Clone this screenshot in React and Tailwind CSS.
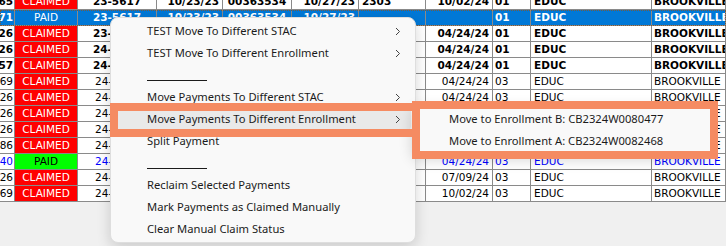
import React from 'react';

const COLS = 'grid grid-cols-[15px_63px_79px_66px_69px_67px_67px_67px_38px_121px_74px]';

// per-column alignment
const ALIGN = [
  'justify-end pr-[1px]',
  'justify-center',
  'justify-center',
  'justify-end pr-[3px]',
  'justify-center',
  'justify-end pr-[3px]',
  'justify-start pl-[3px]',
  'justify-end pr-[3px]',
  'justify-start pl-[2px]',
  'justify-start pl-[3px]',
  'justify-start pl-[2px]',
];

const row = (id, status, num, d3, fund, extra = {}) => ({
  cells: [id, status, num, extra.d1 ?? '11/06/23', extra.chk ?? '00371122', extra.d2 ?? '11/10/23', extra.code ?? '2303', d3, fund, 'EDUC', 'BROOKVILLE'],
  ...extra,
});

const rows = [
  row('65', 'CLAIMED', '23-5617', '10/02/24', '01', { bold: true, d1: '10/23/23', chk: '00363534', d2: '10/27/23' }),
  row('71', 'PAID', '23-5617', '', '01', { bold: true, selected: true, d1: '10/23/23', chk: '00363534', d2: '10/27/23', code: '' }),
  row('26', 'CLAIMED', '23-5617', '04/24/24', '01', { bold: true }),
  row('26', 'CLAIMED', '24-0126', '04/24/24', '01', { bold: true }),
  row('57', 'CLAIMED', '24-0157', '04/24/24', '01', { bold: true }),
  row('69', 'CLAIMED', '24-0169', '04/24/24', '03'),
  row('26', 'CLAIMED', '24-0226', '04/24/24', '03'),
  row('26', 'CLAIMED', '24-0326', '04/24/24', '03'),
  row('26', 'CLAIMED', '24-0426', '04/24/24', '03'),
  row('86', 'CLAIMED', '24-0486', '04/24/24', '03'),
  row('40', 'PAID', '24-0540', '04/24/24', '03', { blue: true }),
  row('26', 'CLAIMED', '24-0626', '07/09/24', '03'),
  row('69', 'CLAIMED', '24-0769', '10/02/24', '03'),
];

const GridRow = ({ r }) => {
  const text = r.selected ? 'text-white' : r.blue ? 'text-[#0000ff]' : 'text-black';
  return (
    <div className={`${COLS} ${r.selected ? 'bg-[#0078d7] outline-1 outline-dotted outline-[#7a5a3a] -outline-offset-1' : 'bg-white'} ${r.bold ? 'font-bold' : ''}`}>
      {r.cells.map((c, i) => {
        let cls = text;
        if (i === 1 && !r.selected) {
          cls = c === 'PAID' ? 'bg-[#00ff00] text-black font-normal' : 'bg-[#ff0000] text-white font-normal';
        }
        if (i === 1 && r.selected) cls = 'text-white font-normal';
        return (
          <div
            key={i}
            className={`flex items-center h-4 overflow-hidden whitespace-nowrap border-r border-b border-[#8a8a8a] leading-[15px] ${ALIGN[i]} ${cls}`}
          >
            {c}
          </div>
        );
      })}
    </div>
  );
};

const Chevron = () => (
  <svg width="6" height="9" viewBox="0 0 6 9" className="text-[#444]">
    <path d="M1 1l3.5 3.5L1 8" fill="none" stroke="currentColor" strokeWidth="1" />
  </svg>
);

const menuItems = [
  { label: 'TEST Move To Different STAC', sub: true },
  { label: 'TEST Move To Different Enrollment', sub: true },
  { sep: true },
  { label: 'Move Payments To Different STAC', sub: true },
  { label: 'Move Payments To Different Enrollment', sub: true, active: true },
  { label: 'Split Payment' },
  { sep: true },
  { label: 'Reclaim Selected Payments' },
  { label: 'Mark Payments as Claimed Manually' },
  { label: 'Clear Manual Claim Status' },
];

const MenuItem = ({ item }) => {
  if (item.sep) {
    return (
      <div className="h-[22px] pl-[32px] pt-[16px]">
        <div className="w-[60px] h-px bg-[#1b1b1b]" />
      </div>
    );
  }
  return (
    <div className={`h-[22px] flex items-center justify-between pl-[32px] pr-[10px] rounded ${item.active ? 'bg-[#e9e9e9]' : ''}`}>
      <span>{item.label}</span>
      {item.sub && <Chevron />}
    </div>
  );
};

export default function App() {
  return (
    <div className="relative w-[726px] h-[246px] overflow-hidden bg-[#f0f0f0] font-['DejaVu_Sans',sans-serif] text-[10.5px]">
      {/* data grid */}
      <div className="-mt-[6px]">
        {rows.map((r, i) => (
          <GridRow key={i} r={r} />
        ))}
      </div>

      {/* context menu */}
      <div className="absolute left-[110px] top-[17px] w-[306px] rounded-lg border border-[#dedede] bg-[#f9f9f9] px-1 py-[2px] shadow-[0_4px_14px_rgba(0,0,0,0.16)] font-['Noto_Sans',sans-serif] text-[11.2px] text-[#1b1b1b]">
        {menuItems.map((m, i) => (
          <MenuItem key={i} item={m} />
        ))}
      </div>

      {/* submenu */}
      <div className="absolute left-[412px] top-[104px] w-[300px] rounded-lg border border-[#dedede] bg-[#f9f9f9] px-1 py-[3px] shadow-[0_4px_14px_rgba(0,0,0,0.16)] font-['Noto_Sans',sans-serif] text-[11.2px] text-[#1b1b1b]">
        <div className="h-[22px] flex items-center pl-[32px]">Move to Enrollment B: CB2324W0080477</div>
        <div className="h-[22px] flex items-center pl-[32px]">Move to Enrollment A: CB2324W0082468</div>
      </div>

      {/* annotation boxes */}
      <div className="absolute left-[110px] top-[103px] w-[310px] h-[34px] border-8 border-[#f58b62]" />
      <div className="absolute left-[412px] top-[101px] w-[306px] h-[58px] border-8 border-[#f58b62]" />
    </div>
  );
}
